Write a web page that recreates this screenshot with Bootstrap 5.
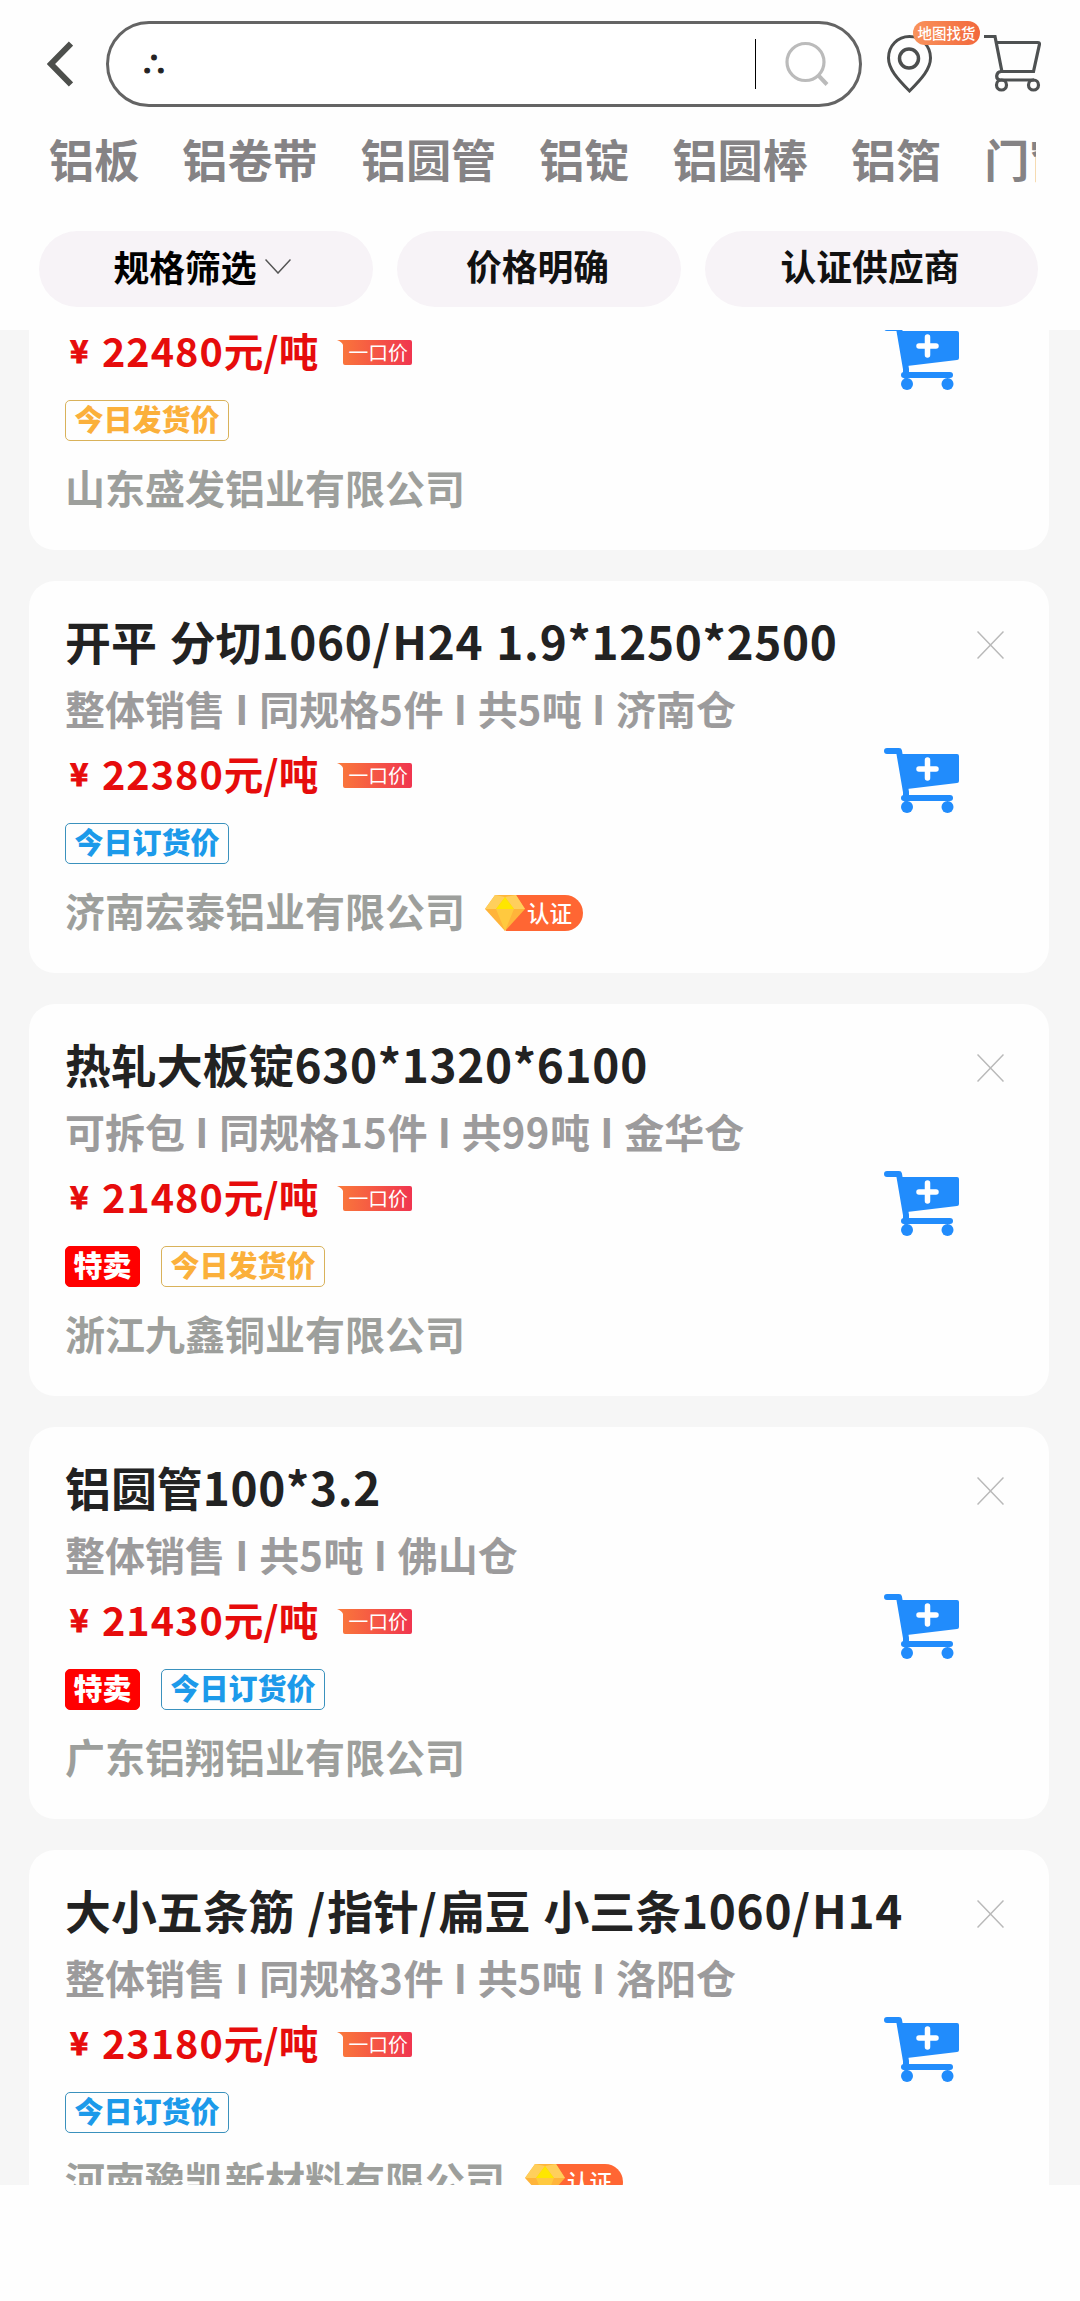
<!DOCTYPE html>
<html lang="zh-CN">
<head>
<meta charset="utf-8">
<meta name="viewport" content="width=device-width, initial-scale=1">
<title>铝板</title>
<link href="https://cdn.jsdelivr.net/npm/bootstrap@5.3.0/dist/css/bootstrap.min.css" rel="stylesheet">
<style>
body{font-family:"Noto Sans CJK SC",sans-serif;background:#fefefe;width:1080px;height:2301px;overflow:hidden;font-weight:700}
svg{display:block;flex:none}
.app-head{height:330px;background:#fefefe}
.top-bar{height:107px;padding:21px 38px 0 47px}
.search-pill{width:756px;height:86px;border:3px solid #646464;border-radius:43px;margin-left:33px;padding-left:31px;padding-right:30px;background:#fff;color:#222}
.dots{font-size:28px;padding-bottom:3px;-webkit-text-stroke:1px #222}
.divider{width:1px;height:50px;background:#000}
.search-icon{margin-left:29px}
.map-entry{margin:14px 0 0 25px}
.cart-entry{margin:14px 0 0 52px}
.map-tip{left:26px;top:-14px;width:67px;height:24px;border-radius:12px;font-size:14.5px;line-height:23px;font-weight:500;color:#fff;background:linear-gradient(90deg,#f9935c,#f2683c)}
.tab-strip{width:987px;margin-left:49px;padding-top:24px;height:124px;gap:43px;font-size:45.15px;line-height:56px;color:#858385}
.filter-bar{padding:0 42px 0 39px}
.filter-pill{height:76px;background:#f7f3f7;border-radius:38px;font-size:35.8px;line-height:69px;color:#111}
.pill-spec{width:334px;padding:0 8px 5px 0}
.pill-price{width:284px;padding-right:3px}
.pill-cert{width:333px;padding-right:3px}
.feed{height:1855px;background:#f6f6f6;overflow:hidden;padding:0 31px 0 29px}
.offer{height:392px;margin-bottom:31px;background:#fefefe;border-radius:26px;padding:32px 38px 0 36px}
.offer:first-child{margin-top:-172px}
.offer-title{font-size:45.9px;line-height:54px;color:#222;height:60px;word-spacing:2.5px}
.offer-title .latin{letter-spacing:.7px}
.offer-title .slash{letter-spacing:2px}
.offer-desc{font-size:40px;line-height:49px;color:#9c9b9c;margin-top:11px;height:52px;word-spacing:1.2px}
.offer-desc .latin{letter-spacing:.5px}
.offer-price{height:52px;margin-top:14px;color:#e60c0c;font-size:39.6px;line-height:46px}
.price-text{height:52px;width:272px}
.yen{font-size:31px;width:37px;padding-left:5px;-webkit-text-stroke:1px #e60c0c}
.amount .latin{letter-spacing:1px}
.fixed-badge{width:75px;height:25px;margin-top:-2px}
.tag-row{gap:21px;margin-top:21px;height:41px}
.tag{height:41px;border:1.5px solid;border-radius:5px;font-size:29px;line-height:34px;padding:0 8.5px;font-weight:900}
.tag-send{color:#fbb03b;border-color:#d9b25a}
.tag-order{color:#1c9aea;border-color:#3a91bd}
.tag-sale{color:#fff;background:#f00;border-color:#f00;padding:0 7.5px}
.offer-firm{font-size:40px;line-height:52px;height:52px;margin-top:20px;color:#9d9f9c;gap:20px}
.cert-badge{margin-top:5px}
.offer-side{width:120px;margin-left:-120px}
.close-x{margin-top:18px;margin-right:7px}
.buy-cart{margin-top:89px;margin-right:51px}
</style>
<script src="https://cdn.jsdelivr.net/npm/bootstrap@5.3.0/dist/js/bootstrap.bundle.min.js"></script>
</head>
<body>
<svg width="0" height="0" class="position-absolute">
<defs>
<linearGradient id="heat" x1="0" x2="1"><stop offset="0" stop-color="#fa7a3a"/><stop offset="1" stop-color="#f0354f"/></linearGradient>
<symbol id="cart-plus" viewBox="0 0 76 65"><path d="M3 3H15L22 44V51" fill="none" stroke="#218cfc" stroke-width="6" stroke-linecap="round" stroke-linejoin="round"/><path d="M13 6H73q2 0 2 2V33q0 2-2 2L23 41Z" fill="#218cfc"/><path d="M20 50H66" stroke="#218cfc" stroke-width="6" stroke-linecap="round"/><circle cx="23" cy="59" r="6" fill="#218cfc"/><circle cx="63.500" cy="59" r="6" fill="#218cfc"/><path d="M35 21H52M43.500 12V30" stroke="#fff" stroke-width="5.500" stroke-linecap="round"/></symbol>
<symbol id="cross" viewBox="0 0 27 28"><path d="M.5.5l26 27M26.500.5l-26 27" stroke="#b9b9b9" stroke-width="1.500"/></symbol>
<symbol id="fixed" viewBox="0 0 75 25"><path d="M0 0H73q2 0 2 2V23q0 2-2 2H8q-2 0-2-2V5Q5 2 0 0Z" fill="url(#heat)"/><text x="11.500" y="19.500" font-size="19.800" font-weight="400" fill="#fff">一口价</text></symbol>
<symbol id="cert" viewBox="0 0 98 36"><path d="M11 0H80a18 18 0 0 1 0 36H21Z" fill="#ff6633"/><path d="M10 0H31L40 14 20 36 0 14Z" fill="#ffb43a"/><path d="M10 0L0 14H11L20 2ZM31 0L40 14H29L20 2Z" fill="#ffcf5c"/><path d="M20 2L29 14H11Z" fill="#ffe600"/><path d="M11 14H29L20 36Z" fill="#ffc93f"/><text x="42" y="27" font-size="22.500" font-weight="500" fill="#fff">认证</text></symbol>
</defs>
</svg>
<header class="app-head">
<div class="top-bar d-flex">
<svg class="my-auto" width="26" height="46" viewBox="0 0 26 46"><path d="M24 2.500L4 23l20 20.500" fill="none" stroke="#4d4f4c" stroke-width="6"/></svg>
<div class="search-pill d-flex align-items-center flex-shrink-0"><span class="dots">∴</span><span class="divider ms-auto"></span>
<svg class="search-icon" width="44" height="46" viewBox="0 0 44 46"><circle cx="20.500" cy="21" r="18.500" fill="none" stroke="#bbb" stroke-width="3.200"/><path d="M33 34L42 43.500" stroke="#bbb" stroke-width="4"/></svg></div>
<div class="map-entry position-relative flex-shrink-0"><svg width="45" height="58" viewBox="0 0 45 58"><path d="M22.500 1.500C10.500 1.500 1.500 11 1.500 23c0 11 9 21 21 33 12-12 21-22 21-33 0-12-9-21.500-21-21.500Z" fill="none" stroke="#4c4e4e" stroke-width="3"/><circle cx="22" cy="23.500" r="9.500" fill="none" stroke="#4c4e4e" stroke-width="3.500"/></svg>
<span class="map-tip position-absolute text-center text-nowrap">地图找货</span></div>
<svg class="cart-entry" width="57" height="57" viewBox="0 0 57 57"><g fill="none" stroke="#4e5152" stroke-width="3.200"><path d="M0 1.500H11L18 37M12 7.500H54q1.500 0 1.500 1.500L49.500 36.500H17C12 37 11 44 16 45H50"/><circle cx="17.500" cy="50" r="5"/><circle cx="49.500" cy="50" r="5"/></g></svg>
</div>
<nav class="tab-strip d-flex text-nowrap overflow-hidden"><span>铝板</span><span>铝卷带</span><span>铝圆管</span><span>铝锭</span><span>铝圆棒</span><span>铝箔</span><span>门窗</span></nav>
<div class="filter-bar d-flex justify-content-between">
<div class="filter-pill pill-spec d-flex justify-content-center align-items-center text-black"><span>规格筛选</span><svg class="ms-2" width="26" height="15" viewBox="0 0 26 15"><path d="M.5.5L13 14 25.500.5" fill="none" stroke="#555" stroke-width="1.500"/></svg></div>
<div class="filter-pill pill-price text-center">价格明确</div>
<div class="filter-pill pill-cert text-center">认证供应商</div>
</div>
</header>
<main class="feed" id="feed"></main>
<script>
const offers=[
["","",22480,["send"],"山东盛发铝业有限公司",0],
["开平 分切1060/H24 1.9*1250*2500","整体销售 I 同规格5件 I 共5吨 I 济南仓",22380,["order"],"济南宏泰铝业有限公司",1],
["热轧大板锭630*1320*6100","可拆包 I 同规格15件 I 共99吨 I 金华仓",21480,["sale","send"],"浙江九鑫铜业有限公司",0],
["铝圆管100*3.2","整体销售 I 共5吨 I 佛山仓",21430,["sale","order"],"广东铝翔铝业有限公司",0],
["大小五条筋 /指针/扁豆 小三条1060/H14","整体销售 I 同规格3件 I 共5吨 I 洛阳仓",23180,["order"],"河南豫凯新材料有限公司",1]];
const names={send:"今日发货价",order:"今日订货价",sale:"特卖"};
const track=s=>s.replace(/[A-Z0-9.*]+|\//g,m=>`<span class="${m==="/"?"slash":"latin"}">${m}</span>`);
document.getElementById("feed").innerHTML=offers.map(([t,d,p,g,f,c])=>`<article class="offer d-flex justify-content-between">
<div class="text-nowrap"><div class="offer-title">${track(t)}</div><div class="offer-desc">${track(d)}</div>
<div class="offer-price d-flex align-items-center"><div class="price-text d-flex"><span class="yen">¥</span><span class="amount">${track(p+"元/吨")}</span></div><svg class="fixed-badge"><use href="#fixed"/></svg></div>
<div class="tag-row d-flex">${g.map(k=>`<span class="tag tag-${k}">${names[k]}</span>`).join("")}</div>
<div class="offer-firm d-flex align-items-center"><span>${f}</span>${c?'<svg class="cert-badge" width="98" height="36"><use href="#cert"/></svg>':""}</div></div>
<div class="offer-side d-flex flex-column align-items-end"><svg class="close-x" width="27" height="28"><use href="#cross"/></svg><svg class="buy-cart" width="76" height="65"><use href="#cart-plus"/></svg></div>
</article>`).join("");
</script>
</body>
</html>
